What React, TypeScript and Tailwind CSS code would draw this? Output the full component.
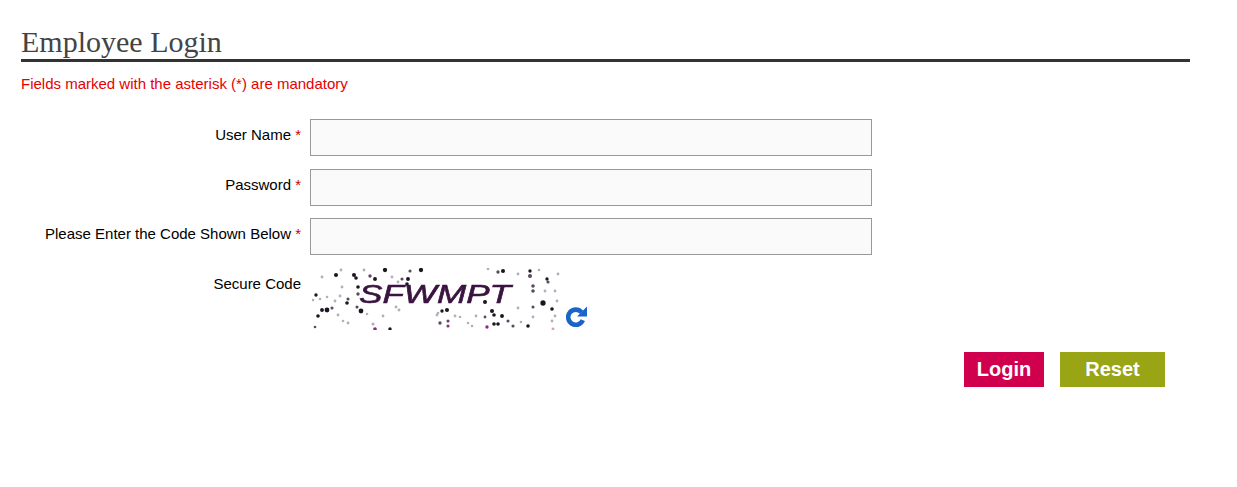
const rows = [
  { label: "User Name", type: "text" },
  { label: "Password", type: "password" },
  { label: "Please Enter the Code Shown Below", type: "text" },
];

// captcha speckle, read off the reference: x, y, radius, colour
const DARK = "#1c1420";
const MID = "#5a4a60";
const LIGHT = "#b5aeb8";
const PINK = "#8a2a80";
const dots: [number, number, number, string][] = [
  [73, 2, 1.8, DARK], [109, 2, 1.8, DARK], [24, 7, 1.7, DARK], [42, 7, 1.7, DARK], [44, 10, 1.5, DARK],
  [58, 8, 1.4, MID], [63, 11, 1.6, DARK], [98, 3, 1.3, MID], [10, 9, 1.2, LIGHT], [29, 2, 1.2, LIGHT],
  [52, 2, 1.2, LIGHT], [80, 9, 1.2, LIGHT], [96, 11, 1.6, DARK], [90, 11, 1.3, MID], [95, 16, 1.5, DARK],
  [86, 14, 1.2, LIGHT], [30, 19, 1.2, LIGHT], [46, 19, 1.5, DARK], [46, 26, 1.4, MID], [4, 27, 1.4, DARK],
  [1, 32, 1.1, LIGHT], [8, 31, 1.1, LIGHT], [15, 29, 1.1, LIGHT], [28, 28, 1.2, LIGHT], [36, 31, 1.3, MID],
  [35, 35, 1.5, DARK], [23, 33, 1.2, LIGHT], [10, 42, 1.6, DARK], [15, 42, 2, DARK], [20, 40, 1.3, MID],
  [6, 48, 1.5, DARK], [26, 47, 1.2, LIGHT], [49, 43, 2, DARK], [45, 39, 1.3, MID], [55, 46, 1.1, LIGHT],
  [71, 48, 1.2, LIGHT], [84, 39, 1.2, LIGHT], [87, 42, 1.2, LIGHT], [31, 53, 1.1, LIGHT], [36, 55, 1.2, LIGHT],
  [61, 56, 1.3, LIGHT], [63, 61, 1.5, PINK], [78, 61, 1.4, DARK], [3, 59, 1.1, MID], [125, 47, 1.2, LIGHT],
  [186, 4, 1.4, MID], [191, 3, 1.7, DARK], [176, 1, 1.1, LIGHT], [218, 3, 1.4, DARK], [218, 8, 1.7, MID],
  [206, 6, 1.2, LIGHT], [227, 2, 1.1, LIGHT], [235, 11, 1.4, DARK], [236, 14, 1.3, MID], [246, 6, 1.2, LIGHT],
  [221, 18, 1.5, MID], [221, 23, 1.5, MID], [233, 23, 1.2, LIGHT], [243, 23, 1.2, LIGHT], [231, 35, 2.2, DARK],
  [240, 41, 1.5, DARK], [245, 33, 1.2, LIGHT], [221, 39, 1.3, MID], [206, 40, 1.2, LIGHT], [173, 34, 1.7, DARK],
  [135, 42, 1.7, DARK], [130, 43, 1.4, DARK], [126, 45, 1.1, LIGHT], [143, 48, 1.2, LIGHT], [148, 49, 1.1, LIGHT],
  [164, 48, 1.2, LIGHT], [180, 43, 1.7, DARK], [182, 47, 1.5, DARK], [190, 48, 1.6, DARK], [173, 49, 1.2, MID],
  [196, 53, 1.3, MID], [209, 54, 1.1, LIGHT], [221, 49, 1.2, LIGHT], [243, 48, 1.2, LIGHT], [240, 53, 1.2, LIGHT],
  [128, 55, 1.4, MID], [136, 53, 1.3, MID], [136, 58, 1.3, PINK], [156, 55, 1.1, LIGHT], [160, 58, 1.1, LIGHT],
  [175, 59, 1.4, PINK], [182, 56, 1.5, DARK], [186, 56, 1.5, DARK], [201, 58, 1.3, MID], [216, 58, 1.5, DARK],
  [241, 61, 1.2, "#d9a0b8"],
];

export default function App() {
  return (
    <div className="min-h-[487px] bg-white pl-[21px] pr-[47px] pt-[25px] font-['Liberation_Sans',Arial,sans-serif] text-[15px] text-black">
      <h2 className="border-b-[3px] border-[#333333] font-['Liberation_Serif','Times_New_Roman',serif] text-[30px] leading-[34px] text-[#444444]">
        Employee Login
      </h2>
      <p className="mt-[12px] leading-[20px] text-[#e60000]">Fields marked with the asterisk (*) are mandatory</p>

      <form className="mt-[25px] flex flex-col gap-[12.5px]">
        {rows.map((row) => (
          <div key={row.label} className="flex items-start">
            <label className="w-[280px] pt-[6px] text-right leading-[20px]">
              {row.label} <span className="text-[#cc0000]">*</span>
            </label>
            <input
              type={row.type}
              className="ml-[9px] h-[37px] w-[562px] border border-[#999999] bg-[#fafafa]"
            />
          </div>
        ))}

        <div className="flex items-start">
          <label className="w-[280px] pt-[6px] text-right leading-[20px]">Secure Code</label>
          <div className="ml-[11px] flex items-end gap-[6px]">
            <svg width="248" height="62" viewBox="0 0 248 62" className="block blur-[0.5px]">
              {dots.map(([x, y, r, fill], i) => (
                <circle key={i} cx={x} cy={y} r={r * 1.2} fill={fill} />
              ))}
              <text
                x="47"
                y="35"
                fontFamily="Liberation Sans, sans-serif"
                fontStyle="italic"
                fontSize="26"
                textLength="152"
                lengthAdjust="spacingAndGlyphs"
                fill="#3a1440"
                stroke="#3a1440"
                strokeWidth="0.6"
              >
                SFWMPT
              </text>
            </svg>
            <svg width="21" height="21" viewBox="0 0 21 21" className="mb-[3px]">
              <path
                d="M15.5 6.2A7.6 7.6 0 1 0 16.8 14.2"
                fill="none"
                stroke="#1a63c8"
                strokeWidth="4.6"
              />
              <path d="M21 0.5V10.5H11Z" fill="#1a63c8" />
            </svg>
          </div>
        </div>

        <div className="mt-[9.5px] flex justify-end gap-[16px] pr-[25px]">
          <button type="button" className="h-[35px] w-[80px] bg-[#d1004f] text-[20px] font-bold text-white">
            Login
          </button>
          <button type="button" className="h-[35px] w-[105px] bg-[#9aa516] text-[20px] font-bold text-white">
            Reset
          </button>
        </div>
      </form>
    </div>
  );
}
